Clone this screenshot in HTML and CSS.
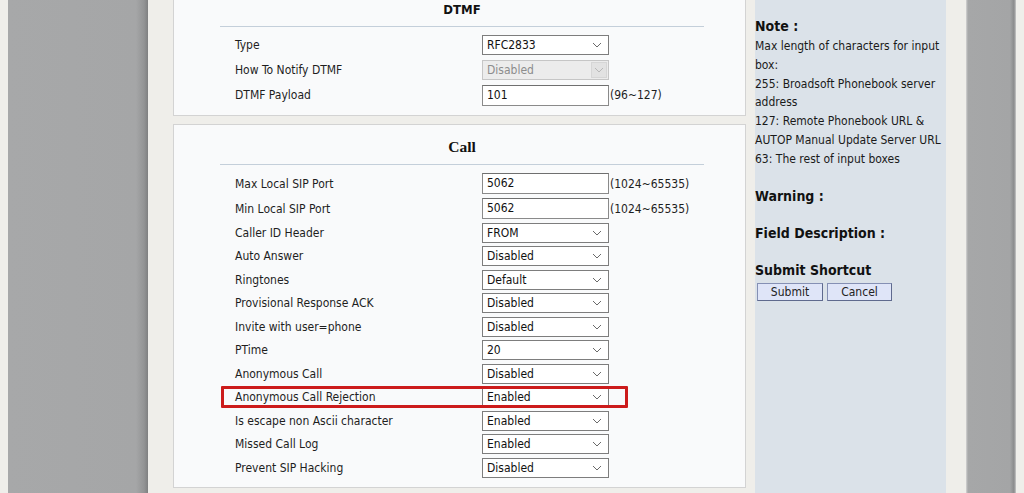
FILE: index.html
```html
<!DOCTYPE html>
<html lang="en">
<head>
  <meta charset="UTF-8">
  <title>Phone - Call Features</title>
  <link rel="stylesheet" href="styles.css">
</head>

<body>
  <div class="page">
    <div class="edge"></div>
    <div class="shade shade-left"></div>
    <div class="gutter gutter-left"></div>

    <main class="content">
      <!-- DTMF -->
      <section class="panel panel-first">
        <h2 class="panel-title">DTMF</h2>
        <div class="rule"></div>
        <div class="rows">
          <div class="row">
            <div class="label">Type</div>
            <div class="select"><span>RFC2833</span><svg class="chev" width="10" height="6" viewBox="0 0 10 6"><path d="M1 1L5 5L9 1" fill="none" stroke="#6a6a6a" stroke-width="1"/></svg></div>
          </div>
          <div class="row">
            <div class="label">How To Notify DTMF</div>
            <div class="select select-disabled"><span>Disabled</span><i class="drop-btn"><svg class="chev" width="10" height="6" viewBox="0 0 10 6"><path d="M1 1L5 5L9 1" fill="none" stroke="#b8b8b8" stroke-width="1"/></svg></i></div>
          </div>
          <div class="row">
            <div class="label">DTMF Payload</div>
            <div class="input">101</div>
            <span class="hint">(96~127)</span>
          </div>
        </div>
      </section>

      <!-- Call -->
      <section class="panel">
        <h2 class="panel-title panel-title-call">Call</h2>
        <div class="rule"></div>
        <div class="rows">
          <div class="row">
            <div class="label">Max Local SIP Port</div>
            <div class="input">5062</div>
            <span class="hint">(1024~65535)</span>
          </div>
          <div class="row">
            <div class="label">Min Local SIP Port</div>
            <div class="input">5062</div>
            <span class="hint">(1024~65535)</span>
          </div>
          <div class="row row-sel">
            <div class="label">Caller ID Header</div>
            <div class="select"><span>FROM</span><svg class="chev" width="10" height="6" viewBox="0 0 10 6"><path d="M1 1L5 5L9 1" fill="none" stroke="#6a6a6a" stroke-width="1"/></svg></div>
          </div>
          <div class="row row-sel">
            <div class="label">Auto Answer</div>
            <div class="select"><span>Disabled</span><svg class="chev" width="10" height="6" viewBox="0 0 10 6"><path d="M1 1L5 5L9 1" fill="none" stroke="#6a6a6a" stroke-width="1"/></svg></div>
          </div>
          <div class="row row-sel">
            <div class="label">Ringtones</div>
            <div class="select"><span>Default</span><svg class="chev" width="10" height="6" viewBox="0 0 10 6"><path d="M1 1L5 5L9 1" fill="none" stroke="#6a6a6a" stroke-width="1"/></svg></div>
          </div>
          <div class="row row-sel">
            <div class="label">Provisional Response ACK</div>
            <div class="select"><span>Disabled</span><svg class="chev" width="10" height="6" viewBox="0 0 10 6"><path d="M1 1L5 5L9 1" fill="none" stroke="#6a6a6a" stroke-width="1"/></svg></div>
          </div>
          <div class="row row-sel">
            <div class="label">Invite with user=phone</div>
            <div class="select"><span>Disabled</span><svg class="chev" width="10" height="6" viewBox="0 0 10 6"><path d="M1 1L5 5L9 1" fill="none" stroke="#6a6a6a" stroke-width="1"/></svg></div>
          </div>
          <div class="row row-sel">
            <div class="label">PTime</div>
            <div class="select"><span>20</span><svg class="chev" width="10" height="6" viewBox="0 0 10 6"><path d="M1 1L5 5L9 1" fill="none" stroke="#6a6a6a" stroke-width="1"/></svg></div>
          </div>
          <div class="row row-sel">
            <div class="label">Anonymous Call</div>
            <div class="select"><span>Disabled</span><svg class="chev" width="10" height="6" viewBox="0 0 10 6"><path d="M1 1L5 5L9 1" fill="none" stroke="#6a6a6a" stroke-width="1"/></svg></div>
          </div>
          <!-- marked row -->
          <div class="row row-sel row-marked">
            <div class="label">Anonymous Call Rejection</div>
            <div class="select"><span>Enabled</span><svg class="chev" width="10" height="6" viewBox="0 0 10 6"><path d="M1 1L5 5L9 1" fill="none" stroke="#6a6a6a" stroke-width="1"/></svg></div>
          </div>
          <div class="row row-sel">
            <div class="label">Is escape non Ascii character</div>
            <div class="select"><span>Enabled</span><svg class="chev" width="10" height="6" viewBox="0 0 10 6"><path d="M1 1L5 5L9 1" fill="none" stroke="#6a6a6a" stroke-width="1"/></svg></div>
          </div>
          <div class="row row-sel">
            <div class="label">Missed Call Log</div>
            <div class="select"><span>Enabled</span><svg class="chev" width="10" height="6" viewBox="0 0 10 6"><path d="M1 1L5 5L9 1" fill="none" stroke="#6a6a6a" stroke-width="1"/></svg></div>
          </div>
          <div class="row row-sel">
            <div class="label">Prevent SIP Hacking</div>
            <div class="select"><span>Disabled</span><svg class="chev" width="10" height="6" viewBox="0 0 10 6"><path d="M1 1L5 5L9 1" fill="none" stroke="#6a6a6a" stroke-width="1"/></svg></div>
          </div>
        </div>
      </section>
    </main>

    <div class="gutter gutter-mid"></div>

    <!-- Side help -->
    <aside class="sidebar">
      <div class="side-title">Note :</div>
      <div class="side-text">
        Max length of characters for input<br>
        box:<br>
        255: Broadsoft Phonebook server<br>
        address<br>
        127: Remote Phonebook URL &amp;<br>
        AUTOP Manual Update Server URL<br>
        63: The rest of input boxes
      </div>
      <div class="side-title side-gap">Warning :</div>
      <div class="side-title side-gap">Field Description :</div>
      <div class="side-title side-gap">Submit Shortcut</div>
      <div class="side-buttons">
        <button class="btn btn-submit">Submit</button>
        <button class="btn btn-cancel">Cancel</button>
      </div>
    </aside>

    <div class="gutter gutter-right"></div>
    <div class="shade shade-right"></div>
    <div class="edge"></div>
  </div>
</body>
</html>
```

FILE: styles.css
```css
/* ===============================
   BASE
=============================== */
html, body {
  margin: 0;
  padding: 0;
  height: 100%;
  overflow: hidden;
}
body {
  background: #efeeea;
  font-family: "DejaVu Sans Condensed", "DejaVu Sans", sans-serif;
  font-stretch: condensed;
  font-size: 12px;
  color: #1e1e1e;
}

.page {
  display: flex;
  height: 493px;
}

/* outer strips */
.edge {
  width: 8px;
  flex: none;
}
.shade {
  flex: none;
  background: #a5a6a7;
}
.shade-left {
  width: 140px;
  background: linear-gradient(to right, #a7a8a9 0, #a5a6a7 128px, #939495 136px, #7f8081 140px);
}
.shade-right {
  width: 50px;
  background: linear-gradient(to right, #d4d4d4 0, #a6a7a8 2px, #a4a5a6 44px, #8a8b8c 48px, #c8c8c8 50px);
}
.gutter {
  flex: none;
}
.gutter-left  { width: 25px; }
.gutter-mid   { width: 9px; }
.gutter-right { width: 20px; }

/* ===============================
   PANELS
=============================== */
.content {
  width: 573px;
  flex: none;
}
.panel {
  background: #f9fafb;
  border: 1px solid #d3d3d3;
  padding: 11px 0 7px;
  margin-bottom: 8.5px;
  box-sizing: border-box;
}
.panel-first {
  margin-top: -12.5px;
  border-top: none;
  padding-top: 12px;
}
.panel-title {
  margin: 0 0 6px;
  text-align: center;
  font-size: 13px;
  line-height: 20px;
  font-weight: bold;
  color: #111;
  padding-left: 5px;
}
.panel-title-call {
  font-family: "Liberation Serif", serif;
  font-size: 15.5px;
  line-height: 22px;
}
.rule {
  height: 1px;
  background: #c4cfda;
  margin: 0 41px 0 46px;
}
.rows {
  padding-top: 6px;
}

.row {
  display: flex;
  align-items: center;
  height: 25px;
  padding-left: 61px;
  position: relative;
}
.row-sel {
  height: 23.5px;
}
.label {
  width: 247px;
  flex: none;
}

/* red highlight round the row */
.row-marked::after {
  content: '';
  position: absolute;
  left: 47px;
  top: 0;
  width: 407px;
  height: 22.5px;
  border: 3px solid #cc1b1b;
  box-sizing: border-box;
  border-radius: 1px;
}

/* fake form controls */
.input,
.select {
  width: 127px;
  box-sizing: border-box;
  background: #fff;
  color: #111;
  padding-left: 4px;
  flex: none;
}
.input {
  height: 21px;
  line-height: 19px;
  border: 1px solid #8a8a8a;
  border-top-color: #6f6f6f;
}
.select {
  height: 20px;
  line-height: 18px;
  border: 1px solid #7d7d7d;
  display: flex;
  align-items: center;
  justify-content: space-between;
  padding-right: 6px;
}
.chev {
  display: block;
}
.select-disabled {
  background: #ececec;
  border-color: #c6c6c6;
  color: #8c8c8c;
  padding-right: 1px;
}
.drop-btn {
  width: 16px;
  height: 16px;
  background: #e2e2e2;
  border: 1px solid #d6d6d6;
  box-sizing: border-box;
  display: flex;
  align-items: center;
  justify-content: center;
}
.hint {
  padding-left: 1px;
}

/* ===============================
   SIDEBAR
=============================== */
.sidebar {
  width: 191px;
  flex: none;
  background: #dbe2e9;
  padding: 16px 0 0 0;
  box-sizing: border-box;
  color: #1a1a1a;
}
.side-title {
  font-size: 14px;
  font-weight: bold;
  line-height: 20px;
  color: #111;
}
.side-gap {
  margin-top: 17px;
}
.side-text {
  margin-top: 1px;
  line-height: 18.8px;
  white-space: nowrap;
}
.side-buttons {
  display: flex;
  gap: 4px;
  margin: 3px 0 0 2px;
}
.btn {
  height: 18px;
  padding: 0;
  font-family: inherit;
  font-stretch: condensed;
  font-size: 12px;
  color: #222;
  background: #dfe5f8;
  border: 1px solid #8590b4;
  border-right-color: #5f6a8e;
  border-bottom-color: #5f6a8e;
}
.btn-submit { width: 66px; }
.btn-cancel { width: 65px; }
```
